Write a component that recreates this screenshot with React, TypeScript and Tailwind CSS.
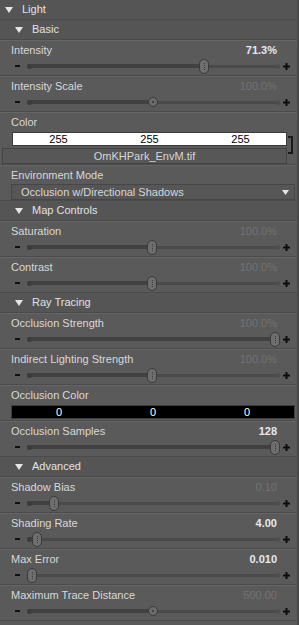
const font = { fontFamily: '"Liberation Sans", Arial, sans-serif' };

type SliderRowProps = {
  label: string;
  value: string;
  bright?: boolean;
  thumb: number;
  round?: boolean;
};

function Triangle() {
  return (
    <svg width="8" height="6" viewBox="0 0 8 6" className="shrink-0">
      <path d="M0 0 L8 0 L4 6 Z" fill="#e6e6e6" />
    </svg>
  );
}

function Header({ label, sub }: { label: string; sub?: boolean }) {
  return (
    <div className={`h-[20px] flex items-center bg-[#555555] border-b border-[#4a4a4a] ${sub ? 'pl-[15px]' : 'pl-[5px]'}`}>
      <Triangle />
      <span className="ml-[9px] text-[11px] text-[#e2e2e2] leading-none">{label}</span>
    </div>
  );
}

function Slider({ thumb, round }: { thumb: number; round?: boolean }) {
  // thumb = center x in page pixels; track spans 27..280
  const left = thumb - 27;
  return (
    <div className="h-[16px] flex items-center pl-[15px]">
      <div className="w-[5px] h-[2px] bg-[#111]" />
      <div className="ml-[7px] w-[253px] h-[16px] relative flex items-center">
        <div className="w-full h-[3px] rounded-full bg-[#4a4a4a]" />
        <div className="absolute left-0 h-[4px] rounded-full bg-[#414141]" style={{ width: left }} />
        <div className="absolute left-0 w-[5px] h-[5px] rounded-full bg-[#3c3c3c]" />
        <div className="absolute right-0 w-[5px] h-[5px] rounded-full bg-[#4e4e4e]" />
        {round ? (
          <div
            className="absolute top-[3px] w-[10px] h-[10px] rounded-full bg-[#6b6b6b] border border-[#3a3a3a] flex items-center justify-center"
            style={{ left: left - 5 }}
          >
            <div className="w-[2px] h-[2px] rounded-full bg-[#333]" />
          </div>
        ) : (
          <div
            className="absolute top-[1px] w-[10px] h-[15px] rounded-full bg-[#6e6e6e] border border-[#3a3a3a] flex items-center justify-center"
            style={{ left: left - 5 }}
          >
            <div className="w-px h-[7px] border-l border-dotted border-[#3c3c3c]" />
          </div>
        )}
      </div>
      <svg width="7" height="7" viewBox="0 0 7 7" className="ml-[3px]">
        <path d="M0 2.5 H7 V4.5 H0 Z M2.5 0 H4.5 V7 H2.5 Z" fill="#0c0c0c" />
      </svg>
    </div>
  );
}

function SliderRow({ label, value, bright, thumb, round }: SliderRowProps) {
  return (
    <div className="h-[36px] border-b border-[#4b4b4b] border-t border-t-[#656565] flex flex-col">
      <div className="mt-[1px] h-[16px] flex items-center justify-between pl-[11px] pr-[20px] text-[11px]">
        <span className="text-[#d8d8d8]">{label}</span>
        <span className={bright ? 'font-bold text-[#e6e8f0]' : 'text-[#727272]'}>{value}</span>
      </div>
      <Slider thumb={thumb} round={round} />
    </div>
  );
}

function Label({ children }: { children: string }) {
  return <div className="mt-[1px] h-[16px] flex items-center pl-[11px] text-[11px] text-[#d8d8d8]">{children}</div>;
}

export default function App() {
  return (
    <div className="w-[299px] h-[625px] bg-[#5a5a5a] overflow-hidden border-r-2 border-[#4a4a4a]" style={font}>
      <Header label="Light" />
      <Header label="Basic" sub />
      <SliderRow label="Intensity" value="71.3%" bright thumb={204} />
      <SliderRow label="Intensity Scale" value="100.0%" thumb={153} round />

      <div className="h-[53px] border-b border-[#4b4b4b] border-t border-t-[#656565]">
        <Label>Color</Label>
        <div className="flex items-center mt-[2px]">
          <div className="ml-[12px] w-[275px] h-[14px] bg-white border border-[#3a3a3a] grid grid-cols-3 text-[11px] leading-[12px] text-black text-center">
            <span>255</span>
            <span>255</span>
            <span>255</span>
          </div>
        </div>
        <div className="flex">
          <div className="ml-[2px] mt-[2px] w-[285px] h-[16px] border border-[#444] bg-[#575757] text-[11px] leading-[14px] text-[#d6d6d6] text-center">
            OmKHPark_EnvM.tif
          </div>
          <div className="ml-[1px] -mt-[10px] w-[5px] h-[18px] border-y-2 border-r-2 border-[#1a1a1a]" />
        </div>
      </div>

      <div className="h-[36px] border-b border-[#4b4b4b] border-t border-t-[#656565]">
        <Label>Environment Mode</Label>
        <div className="ml-[11px] mt-[1px] w-[284px] h-[16px] border border-[#464646] bg-[#565656] flex items-center justify-between pl-[9px] pr-[5px] text-[11px] text-[#d8d8d8]">
          <span>Occlusion w/Directional Shadows</span>
          <svg width="7" height="5" viewBox="0 0 7 5">
            <path d="M0 0 H7 L3.5 5 Z" fill="#e6e6e6" />
          </svg>
        </div>
      </div>

      <Header label="Map Controls" sub />
      <SliderRow label="Saturation" value="100.0%" thumb={152} />
      <SliderRow label="Contrast" value="100.0%" thumb={152} />

      <Header label="Ray Tracing" sub />
      <SliderRow label="Occlusion Strength" value="100.0%" thumb={275} />
      <SliderRow label="Indirect Lighting Strength" value="100.0%" thumb={152} />

      <div className="h-[36px] border-b border-[#4b4b4b] border-t border-t-[#656565]">
        <Label>Occlusion Color</Label>
        <div className="ml-[11px] mt-[2px] w-[284px] h-[14px] bg-black border border-[#3e3e3e] grid grid-cols-3 text-[11px] leading-[12px] text-white text-center">
          <span>0</span>
          <span>0</span>
          <span>0</span>
        </div>
      </div>
      <SliderRow label="Occlusion Samples" value="128" bright thumb={275} />

      <Header label="Advanced" sub />
      <SliderRow label="Shadow Bias" value="0.10" thumb={54} />
      <SliderRow label="Shading Rate" value="4.00" bright thumb={37} />
      <SliderRow label="Max Error" value="0.010" bright thumb={32} />
      <SliderRow label="Maximum Trace Distance" value="500.00" thumb={153} round />
    </div>
  );
}
